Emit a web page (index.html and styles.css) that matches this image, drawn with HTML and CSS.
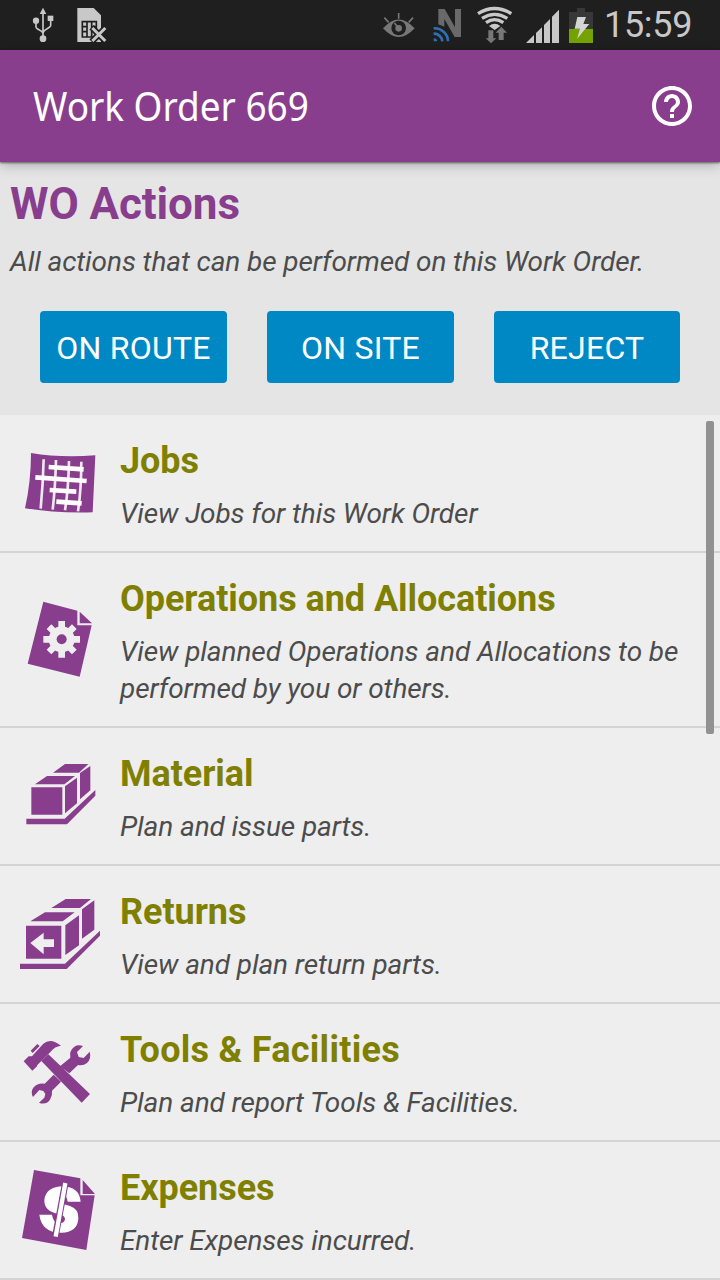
FILE: index.html
```
<!DOCTYPE html>
<html lang="en">
<head>
<meta charset="utf-8">
<title>Work Order 669</title>
<link rel="stylesheet" href="styles.css">
</head>
<body>
<div class="screen">
  <div class="status">
    <svg class="status-left" width="120" height="50" viewBox="0 0 360 150">
      <g fill="none" stroke="#c8c8c8" stroke-width="5">
        <path d="M129 36V112M108 62V81Q108 84 112 86L125 94Q129 97 129 102M152 54V76Q152 80 148 82L134 91Q129 95 129 101"/>
      </g>
      <g fill="#c8c8c8">
        <path d="M129 23L139 42H119Z"/><circle cx="108" cy="62" r="9.5"/><rect x="143" y="47" width="17" height="16"/><circle cx="129" cy="116" r="10"/>
        <path d="M232 24H281L303 46V126H232Z"/>
      </g>
      <path d="M247 65H289V111H247ZM261 65V111M275 65V111M247 80H261M247 95H261M275 80H289" fill="none" stroke="#1f1f1f" stroke-width="5"/>
      <path d="M275 82L318 125M318 82L275 125" stroke="#1f1f1f" stroke-width="19"/>
      <path d="M277 84L316 123M316 84L277 123" stroke="#c8c8c8" stroke-width="9"/>
    </svg>
    <div class="status-right">
      <svg width="230" height="50" viewBox="0 0 690 150">
        <path d="M39 85Q86 32 134 85Q86 137 39 85Z" fill="#777"/>
        <circle cx="86" cy="84" r="22" fill="#1f1f1f"/><circle cx="86" cy="85" r="10" fill="#777"/>
        <path d="M86 39V56M43 53L56 67M129 53L116 67M73 69L86 84" stroke="#777" stroke-width="5" fill="none"/>
        <path d="M205 27H224L255 82V27H273V111H254L223 57V80L205 73Z" fill="#696969"/>
        <g fill="none" stroke="#2f70b5" stroke-width="8"><path d="M191 85A40 40 0 0 1 234 124M191 101A25 25 0 0 1 217 124"/></g><path d="M191 115Q201 115 202 124H191Z" fill="#2f70b5"/>
        <g fill="none" stroke="#c8c8c8" stroke-width="10"><path d="M324 41Q374 10 424 41M336 55Q374 31 412 55M348 68Q374 50 400 68"/></g>
        <path d="M357 78Q374 65 391 78L374 90Z" fill="#c8c8c8"/>
        <path d="M355 91H370V115H379L363 130L347 115H355ZM386 120V98H377L394 80L411 98H401V120Z" fill="#777"/>
        <path d="M468 129L492 105V129ZM498 129V99L516 82V129ZM522 129V75L540 57V129ZM546 129V50L567 29V129Z" fill="#c8c8c8"/>
        <path d="M597 36H621V24H645V36H669V87H597Z" fill="#383838"/><path d="M597 87H669V129H597Z" fill="#74a300"/>
        <path d="M622 51H648L640 72H658L621 117L630 86H614Z" fill="#d4d4d4"/>
      </svg>
      <span class="clock">15:59</span>
    </div>
  </div>
  <header class="appbar">
    <h1 class="app-title">Work Order 669</h1>
    <svg class="help" width="48" height="48" viewBox="0 0 24 24" fill="#fff"><path d="M11 18h2v-2h-2v2zm1-16C6.480 2 2 6.480 2 12s4.480 10 10 10 10-4.480 10-10S17.520 2 12 2zm0 18c-4.410 0-8-3.590-8-8s3.590-8 8-8 8 3.590 8 8-3.590 8-8 8zm0-14c-2.210 0-4 1.790-4 4h2c0-1.100.9-2 2-2s2 .9 2 2c0 2-3 1.750-3 5h2c0-2.250 3-2.500 3-5 0-2.210-1.790-4-4-4z"/></svg>
  </header>
  <section class="intro">
    <h2 class="intro-title">WO Actions</h2>
    <p class="intro-text">All actions that can be performed on this Work Order.</p>
    <div class="buttons">
      <button class="btn">ON ROUTE</button><button class="btn">ON SITE</button><button class="btn">REJECT</button>
    </div>
  </section>
  <main class="list">
    <div class="row">
      <svg class="icon" viewBox="0 9 330 300">
        <path class="fill" d="M63 69Q150 84 256 76L248 247Q140 250 45 235Q63 155 63 69Z"/>
        <g fill="none" stroke="#f0e6f0"><path stroke-width="8" d="M101 88Q99 165 92 236M138 90Q136 170 128 239M177 93Q175 180 165 241M214 95Q214 175 204 244"/></g>
        <path d="M116 111L221 118M76 142L230 153M119 180L199 185M139 215L215 220" stroke="#fff" stroke-width="14"/>
      </svg>
      <div class="body"><h3 class="name">Jobs</h3><p class="desc">View Jobs for this Work Order</p></div>
    </div>
    <div class="row">
      <svg class="icon" viewBox="0 -1 330 300">
        <path class="fill" d="M100 34L202 61V105H245L209 259L53 220Z"/><path class="fill" d="M209 64L246 99H209Z"/>
        <g transform="translate(155 147)"><circle r="39" fill="#eee"/><path d="M0-55V55M-55 0H55M-38-38L38 38M38-38L-38 38" stroke="#eee" stroke-width="20"/><circle class="fill" r="15"/></g>
      </svg>
      <div class="body"><h3 class="name">Operations and Allocations</h3><p class="desc">View planned Operations and Allocations to be performed by you or others.</p></div>
    </div>
    <div class="row">
      <svg class="icon" viewBox="0 -12 330 300">
        <path class="fill" d="M64 112H157V194H64ZM75 103L111 78H195L163 103ZM165 109L201 83V160L165 190ZM129 68L165 42H235L207 68ZM210 69L241 48V121L210 148ZM49 206H164L256 120V137L171 223H49Z"/>
      </svg>
      <div class="body"><h3 class="name">Material</h3><p class="desc">Plan and issue parts.</p></div>
    </div>
    <div class="row">
      <svg class="icon" viewBox="0 -3 330 300">
        <path class="fill" d="M48 122H154V221H48ZM61 109L105 82H194L158 109ZM166 121L207 91V181L166 210ZM124 69L167 42H243L210 69ZM216 73L253 46V134L216 161ZM30 236H165L270 137V152L170 252H30Z"/>
        <path d="M61 174L101 143V163H132V186H101V208Z" fill="#eee"/>
      </svg>
      <div class="body"><h3 class="name">Returns</h3><p class="desc">View and plan return parts.</p></div>
    </div>
    <div class="row">
      <svg class="icon" viewBox="0 -9 330 300">
        <path class="fill" d="M41 109L56 94H66L100 56Q122 37 153 62Q134 64 122 80L82 120L81 124L67 137Z"/>
        <path class="fill" d="M62 77L82 57L89 63L68 84ZM94 108L115 88L240 207L215 233Z"/>
        <path class="fill" d="M131 149L104 176Q83 173 70 188Q61 200 69 216L88 195L100 198L106 207L103 218L87 233Q108 241 120 224Q128 210 126 197L153 170ZM150 124L181 98Q177 77 193 65Q204 58 219 63L201 81L206 96L221 99L239 80Q245 100 231 114Q220 123 204 120L178 145Z"/>
      </svg>
      <div class="body"><h3 class="name name-wide">Tools &amp; Facilities</h3><p class="desc">Plan and report Tools &amp; Facilities.</p></div>
    </div>
    <div class="row">
      <svg class="icon" viewBox="0 0 330 300">
        <path class="fill" d="M72 30L211 55V106H254L229 270L36 234Z"/><path class="fill" d="M218 60L255 102H218Z"/>
        <path d="M212 125H173Q171 106 157 106Q147 107 147 118Q148 128 160 132L180 138Q207 147 205 176Q202 216 154 218Q95 218 88 164H126Q129 188 147 190Q164 190 165 177Q165 167 146 162Q101 153 103 119Q109 80 159 79Q208 81 212 125Z" fill="#fff"/>
        <path d="M166 69L136 230" stroke="#883e8d" stroke-width="20"/><path d="M166 69L137 230" stroke="#fff" stroke-width="13"/>
      </svg>
      <div class="body"><h3 class="name">Expenses</h3><p class="desc">Enter Expenses incurred.</p></div>
    </div>
    <div class="scrollbar"></div>
  </main>
</div>
</body>
</html>
```
FILE: styles.css
```
* { box-sizing: border-box; margin: 0; padding: 0; }
body { background: #eee; font-family: Roboto, sans-serif; }
.screen { width: 720px; height: 1280px; overflow: hidden; display: flex; flex-direction: column; }
.status { height: 50px; flex: none; background: #1f1f1f; display: flex; justify-content: space-between; }
.status svg { flex: none; }
.status-right { width: 350px; display: flex; }
.clock { color: #c8c8c8; font-size: 36px; line-height: 50px; letter-spacing: -0.3px; white-space: nowrap; padding-left: 4px; }
.appbar { height: 112px; flex: none; background: #883e8d; padding: 0 24px 0 33px; display: flex; align-items: center; justify-content: space-between; box-shadow: 0 1px 2px rgba(0,0,0,.5), 0 3px 12px rgba(0,0,0,.25); z-index: 1; }
.app-title { color: #fff; font: 400 40px/56px "Noto Sans", sans-serif; white-space: nowrap; transform: scaleX(.924); transform-origin: left; }
.intro { height: 253px; flex: none; background: #e5e5e5; padding: 16px 0 0 10px; }
.intro-title { color: #883e8d; font-size: 44px; line-height: 52px; font-weight: 700; letter-spacing: -0.1px; white-space: nowrap; }
.intro-text { margin-top: 13px; color: #4c4c4c; font-style: italic; font-size: 28px; line-height: 37px; letter-spacing: -0.09px; white-space: nowrap; }
.buttons { display: grid; grid-template-columns: 187px 187px 186px; gap: 40px; padding-left: 30px; margin-top: 31px; }
.btn { height: 72px; border: 0; border-radius: 4px; background: #0088c4; color: #fff; font: 400 32px/74px Roboto, sans-serif; letter-spacing: .25px; white-space: nowrap; }
.list { position: relative; }
.row { display: flex; align-items: center; min-height: 138px; border-bottom: 2px solid #d4d4d4; }
.icon { width: 110px; height: 100px; margin-left: 10px; flex: none; }
.fill { fill: #883e8d; }
.body { flex: 1; padding: 22px 20px 19px 0; align-self: flex-start; }
.name { color: #808000; font-size: 36px; line-height: 48px; font-weight: 700; letter-spacing: -0.05px; white-space: nowrap; }
.name-wide { letter-spacing: .28px; }
.desc { margin-top: 10px; color: #4c4c4c; font-style: italic; font-size: 28px; line-height: 37px; letter-spacing: -0.09px; }
.scrollbar { position: absolute; right: 6px; top: 6px; width: 8px; height: 313px; border-radius: 2px; background: #919191; }
```
